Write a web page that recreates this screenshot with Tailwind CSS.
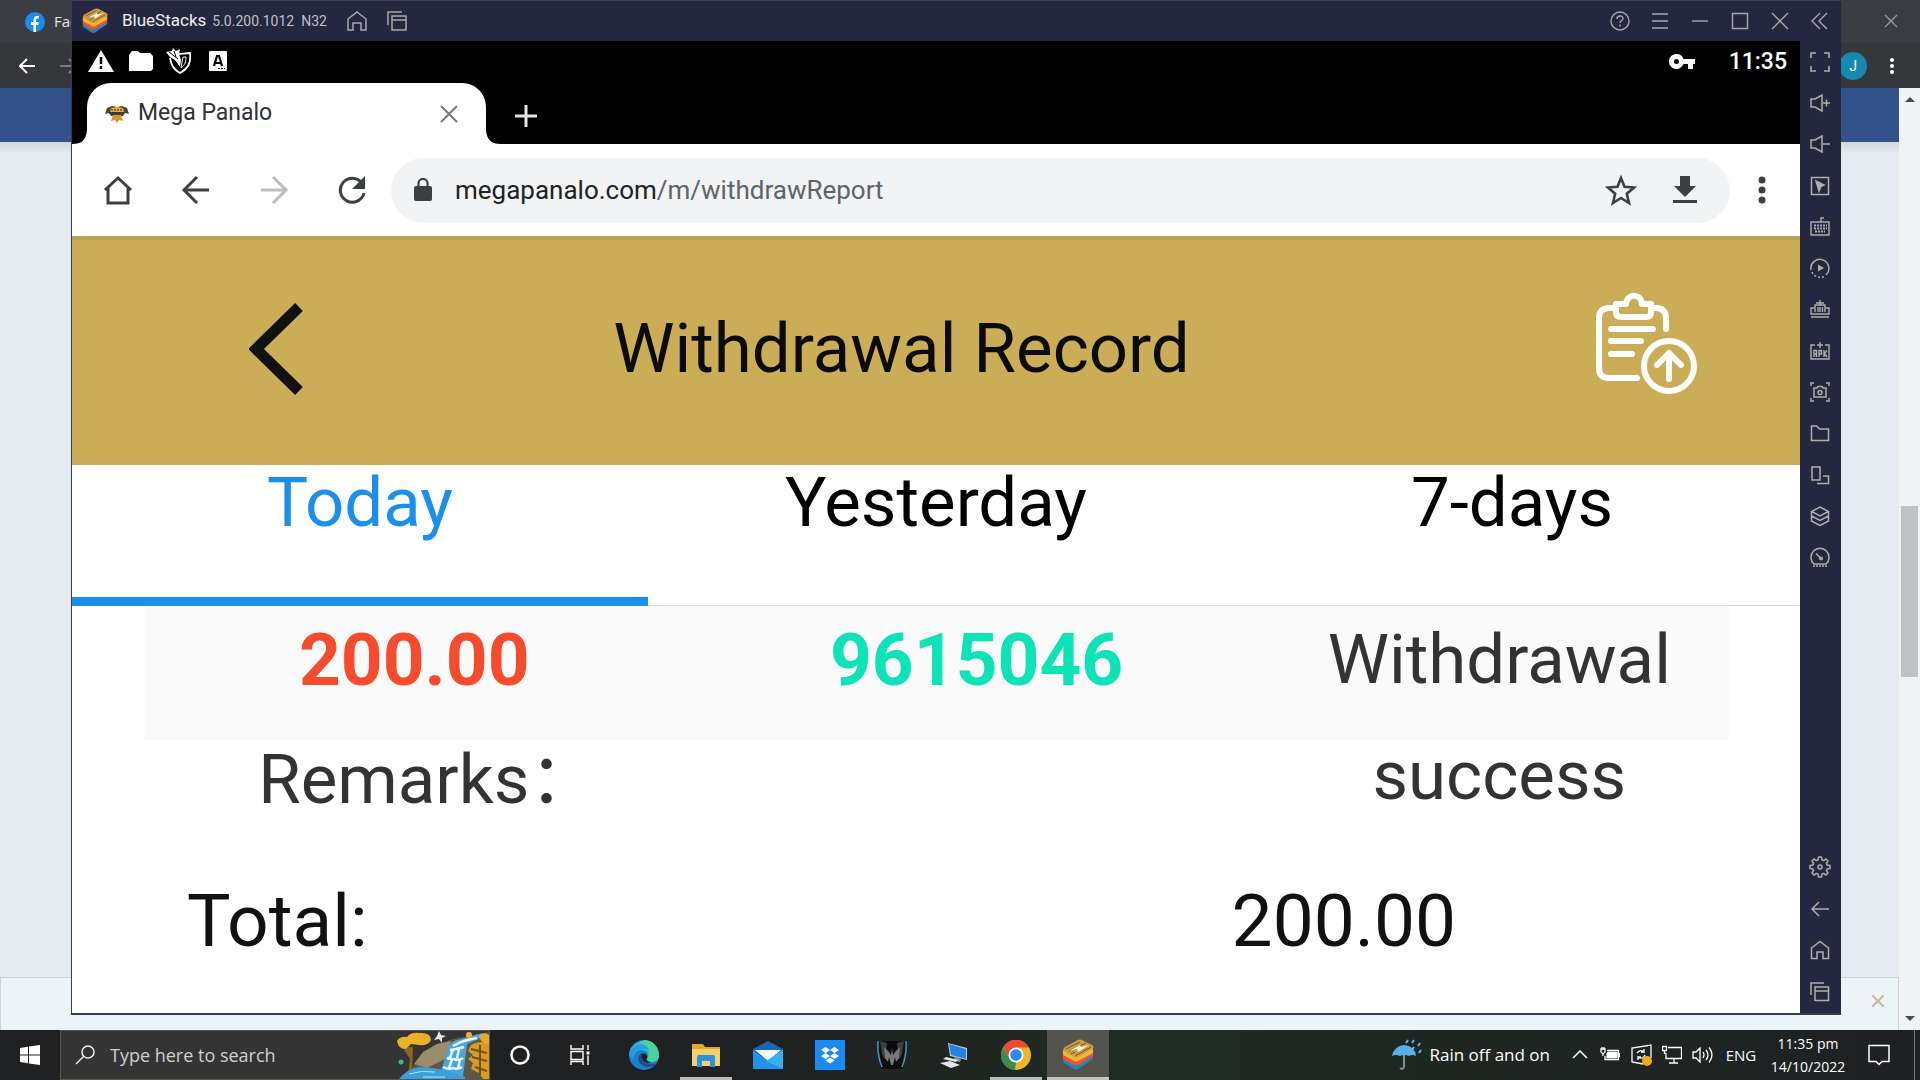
<!DOCTYPE html>
<html lang="en">
<head>
    <meta charset="UTF-8">
    <meta name="viewport" content="width=device-width, initial-scale=1.0">
    <title>Withdrawal Record</title>
    <script src="https://cdn.jsdelivr.net/npm/@tailwindcss/browser@4"></script>
</head>
<body class="h-screen flex flex-col overflow-hidden font-['Roboto',sans-serif]">

<!-- shared logo -->
<svg class="hidden">
    <symbol id="bluestacks" viewBox="0 0 32 32">
        <path d="M1 20v3l11 7q2 1 4 0l15-10v-4L14 25z" fill="#2583bd"/>
        <path d="M1 16v4l11 6q2 1 4 0l15-9v-4L14 21z" fill="#f0542f"/>
        <path d="M1 11v5l11 6q2 1 4 0l15-8V9L14 17z" fill="#f3b62c"/>
        <path d="M2 12Q0 10 3 8l13-7q2-1 4 0l10 5q3 2 0 4L16 18q-2 1-4 0z" fill="#c99c49"/>
        <path d="M4 10L18 3M7 12l17-8M9 15l4-2M13 17l16-9" stroke="#6c5a30" stroke-width="1"/>
        <path d="M7 12l11-6 1 2 8-2-11 7-1-3z" fill="#fbf3da"/>
    </symbol>
</svg>

<main class="relative flex-1 min-h-0 flex flex-col">
    <!-- Browser behind the emulator -->
    <div class="h-[43px] shrink-0 bg-[#3c3d42] flex items-center justify-between pl-[25px] pr-[21px]">
        <div class="flex items-center gap-[9px] text-[15px] text-gray-200 font-['Open_Sans',sans-serif]">
            <svg class="size-5" viewBox="0 0 20 20"><circle cx="10" cy="10" r="10" fill="#1a8cf0"/><path d="M8.500 20v-7H6v-3h2.500V8c0-2.600 1.500-3.900 3.700-3.900.9 0 1.600.1 1.600.1v2.400h-1.200c-1.200 0-1.600.7-1.600 1.500V10h2.700l-.4 3H11v7z" fill="#fff"/></svg>
            <span>Facebook</span>
        </div>
        <button aria-label="Close"><svg class="size-4" viewBox="0 0 16 16" fill="none" stroke="#9a9b9e" stroke-width="1.300"><path d="M2 1l12 12M14 1L2 13"/></svg></button>
    </div>
    <div class="h-[45px] shrink-0 bg-[#36373b] flex items-center justify-between pl-[18px] pr-6">
        <div class="flex items-center gap-6">
            <button aria-label="Back"><svg class="size-[18px]" viewBox="0 0 18 18" fill="none" stroke="#fff" stroke-width="2"><path d="M17 9H2M9 2L2 9l7 7"/></svg></button>
            <button aria-label="Forward"><svg class="size-[18px]" viewBox="0 0 18 18" fill="none" stroke="#7c7d80" stroke-width="2"><path d="M0 9h16M9 2l7 7-7 7"/></svg></button>
        </div>
        <div class="flex items-center gap-[21px]">
            <span class="size-7 rounded-full bg-[#1589ae] text-white text-sm flex items-center justify-center">J</span>
            <button aria-label="Menu"><svg class="w-2 h-5" viewBox="0 0 8 20" fill="#fff"><circle cx="4" cy="4" r="2"/><circle cx="4" cy="10" r="2"/><circle cx="4" cy="16" r="2"/></svg></button>
        </div>
    </div>
    <div class="flex-1 min-h-0 flex bg-[#e6ebf2]">
        <div class="flex-1 flex flex-col">
            <div class="h-[54px] bg-[#34528a]"></div>
            <div class="h-3 bg-linear-to-b from-[#d2d6d9] to-[#e6ebf2]"></div>
            <div class="mt-auto h-[53px] bg-[#ecf4f8] border border-b-0 border-[#ccd6da] flex items-start justify-end pt-[17px] pr-[14px]">
                <button aria-label="Dismiss"><svg class="size-3" viewBox="0 0 12 12" stroke="#cbb99b" stroke-width="2"><path d="M0 0l12 12M12 0L0 12"/></svg></button>
            </div>
        </div>
        <div class="w-[21px] bg-[#f1f2f3] flex flex-col items-center justify-between py-2">
            <svg class="w-[10px] h-[6px]" viewBox="0 0 10 6"><path d="M0 6l5-5 5 5z" fill="#4a4a4a"/></svg>
            <div class="w-[17px] h-[171px] bg-[#c0c1c2] mt-[64px]"></div>
            <svg class="w-[10px] h-[6px]" viewBox="0 0 10 6"><path d="M0 0l5 5 5-5z" fill="#4a4a4a"/></svg>
        </div>
    </div>

    <!-- Emulator window -->
    <div class="absolute top-0 bottom-[15px] left-[71px] right-[79px] flex flex-col bg-[#252640] border-l border-b-2 border-[#333d4c]">
        <div class="h-[41px] shrink-0 border-t border-[#3d3e50] flex items-center text-[#a9a9ab]">
            <svg class="size-[26px] ml-[10px]"><use href="#bluestacks"/></svg>
            <span class="ml-[14px] text-[17px] text-[#eeeeee]">BlueStacks</span>
            <span class="ml-[6px] text-sm text-[#c0c0c8]">5.0.200.1012&nbsp; N32</span>
            <button aria-label="Home" class="ml-5"><svg class="size-5" viewBox="0 0 20 20" fill="none" stroke="currentColor" stroke-width="1.500"><path d="M1 8l9-7 9 7v11h-5v-7H6v7H1z"/></svg></button>
            <button aria-label="Windows" class="ml-5"><svg class="size-5" viewBox="0 0 20 20" fill="none" stroke="currentColor" stroke-width="1.500"><path d="M1 14V1h14M5 5h14v14H5zM5 9h14"/></svg></button>
            <div class="ml-auto flex mr-px">
                <button aria-label="Help" class="w-10 flex justify-center"><svg class="size-5" viewBox="0 0 20 20" fill="none" stroke="currentColor" stroke-width="1.400"><circle cx="10" cy="10" r="9"/><path d="M7 8c0-4 6-4 6-.5 0 2-3 2-3 4.500M10 13.500v2"/></svg></button>
                <button aria-label="Menu" class="w-10 flex justify-center"><svg class="size-5" viewBox="0 0 20 20" stroke="currentColor" stroke-width="1.400"><path d="M2 3h16M2 10h16M2 17h16"/></svg></button>
                <button aria-label="Minimize" class="w-10 flex justify-center"><svg class="size-5" viewBox="0 0 20 20" stroke="currentColor" stroke-width="1.400"><path d="M2 10h16"/></svg></button>
                <button aria-label="Maximize" class="w-10 flex justify-center"><svg class="size-5" viewBox="0 0 20 20" fill="none" stroke="currentColor" stroke-width="1.400"><path d="M2.500 2.500h15v15h-15z"/></svg></button>
                <button aria-label="Close" class="w-10 flex justify-center"><svg class="size-5" viewBox="0 0 20 20" stroke="currentColor" stroke-width="1.400"><path d="M2 2l16 16M18 2L2 18"/></svg></button>
                <button aria-label="Collapse" class="w-10 flex justify-center"><svg class="size-5" viewBox="0 0 20 20" fill="none" stroke="currentColor" stroke-width="1.400"><path d="M10 2l-8 8 8 8M17 2l-8 8 8 8"/></svg></button>
            </div>
        </div>

        <div class="flex-1 min-h-0 flex">
            <div class="flex-1 flex flex-col bg-white">
                <!-- Android status bar -->
                <div class="h-[42px] bg-black text-white flex items-center pb-[2px] pl-4 pr-[13px]">
                    <svg class="w-[26px] h-[22px]" viewBox="0 0 26 22"><path d="M13 0l13 22H0z" fill="#fff"/><path d="M13 7v7M13 16v3" stroke="#000" stroke-width="2.500"/></svg>
                    <svg class="w-[26px] h-[22px] ml-[14px]" viewBox="0 0 26 22" fill="#fff"><path d="M1 5l3-4h6l2 2h10l3 3v13l-2 2H1z"/></svg>
                    <svg class="size-[26px] ml-3" viewBox="0 0 26 26" fill="none" stroke="#fff" stroke-width="1.800"><path d="M13 6c4 0 6-1 11-1 1 9-1 15-10 20C8 22 5 17 4 10"/><path d="M17 9h3c0 5-1 8-5 11z" stroke-width="1"/><path d="M0 4l6-1 1-3 3 3 4-2-1 5 2 6-1 7-5-7-5-3z" fill="#fff" stroke="none"/><path d="M3 4l9 7M8 3l2 6" stroke="#000" stroke-width="1"/></svg>
                    <svg class="w-[18px] h-5 ml-[17px]" viewBox="0 0 18 20"><rect width="18" height="20" rx="1" fill="#fff"/><path d="M5 15l3-10h2l3 10M6 12h6" fill="none" stroke="#000" stroke-width="2.200"/><path d="M9 17.500h7" stroke="#000" stroke-dasharray="2 1"/></svg>
                    <svg class="w-[26px] h-[15px] ml-auto mr-[34px]" viewBox="0 0 26 15"><path fill="#fff" fill-rule="evenodd" d="M7.500 0a7.500 7.500 0 0 1 7 5H26v5h-2v5h-5v-5h-4.500a7.500 7.500 0 1 1-7-10zm0 5a2.500 2.500 0 1 0 0 5 2.500 2.500 0 0 0 0-5z"/></svg>
                    <span class="text-[23px] font-medium leading-none">11:35</span>
                </div>
                <!-- Tab strip -->
                <div class="h-[61px] bg-black flex items-end">
                    <svg class="w-[15px] h-5" viewBox="0 0 15 20" fill="#fff"><path d="M0 20c10 0 14-4 15-14v14z"/></svg>
                    <div class="w-[399px] h-full bg-white rounded-t-[24px] flex items-center pl-[18px] pr-7 text-[23px] text-[#303134]">
                        <svg class="w-6 h-[18px]" viewBox="0 0 24 18"><path d="M2 3l5-2 5 1 5-1 5 2 2 6-4-1-2 3H6L4 8 0 9z" fill="#4c4432"/><path d="M6 3l6-1 6 1 1 4H5z" fill="#e2b13c"/><path d="M8 10h8l2 6-4-1-2 3-2-3-4 1z" fill="#d9952f"/><path d="M6 5h12M4 8h15" stroke="#2a261f" stroke-width="1.200" stroke-dasharray="2 1"/></svg>
                        <span class="ml-[9px]">Mega Panalo</span>
                        <button aria-label="Close tab" class="ml-auto"><svg class="size-[18px]" viewBox="0 0 18 18" stroke="#77787b" stroke-width="2"><path d="M1 1l16 16M17 1L1 17"/></svg></button>
                    </div>
                    <svg class="w-[15px] h-5" viewBox="0 0 15 20" fill="#fff"><path d="M15 20C5 20 1 16 0 6v14z"/></svg>
                    <button aria-label="New tab" class="self-center ml-[13px] pt-1"><svg class="size-6" viewBox="0 0 24 24" stroke="#e4e4e4" stroke-width="3"><path d="M12 1v22M1 12h22"/></svg></button>
                </div>
                <!-- Address bar -->
                <div class="h-[92px] flex items-center pl-[31px] pr-[31px] text-[#3c4043]">
                    <div class="flex gap-12">
                        <button aria-label="Home"><svg class="size-[30px]" viewBox="0 0 30 30" fill="none" stroke="currentColor" stroke-width="3"><path d="M2 15L15 3l13 12M5 13v15h20V13"/></svg></button>
                        <button aria-label="Back"><svg class="size-[30px]" viewBox="0 0 30 30" fill="none" stroke="currentColor" stroke-width="3"><path d="M28 15H3M16 2L3 15l13 13"/></svg></button>
                        <button aria-label="Forward" class="text-[#bcbdbe]"><svg class="size-[30px]" viewBox="0 0 30 30" fill="none" stroke="currentColor" stroke-width="3"><path d="M2 15h25M14 2l13 13-13 13"/></svg></button>
                        <button aria-label="Reload"><svg class="size-[30px]" viewBox="0 0 30 30"><path d="M25 8a12 12 0 1 0 2 10" fill="none" stroke="currentColor" stroke-width="3"/><path d="M28 1v13H15z" fill="currentColor"/></svg></button>
                    </div>
                    <div class="flex-1 h-[65px] rounded-full bg-[#f1f3f4] ml-6 flex items-center pl-[23px] pr-[33px]">
                        <svg class="w-[18px] h-6" viewBox="0 0 18 24"><rect y="8" width="18" height="15" rx="2" fill="currentColor"/><path d="M4.500 9V5.500a4.500 4.500 0 0 1 9 0V9" fill="none" stroke="currentColor" stroke-width="2.200"/></svg>
                        <p class="flex-1 ml-[23px] text-[26px] text-[#202124]">megapanalo.com<span class="text-[#5f6368]">/m/withdrawReport</span></p>
                        <button aria-label="Bookmark"><svg class="size-8" viewBox="0 0 32 32" fill="none" stroke="currentColor" stroke-width="2.600"><path d="M16 4l3.500 8.700 9.500.8-7.200 6.200 2.200 9.300-8-5-8 5 2.200-9.300L3 13.500l9.500-.8z"/></svg></button>
                        <button aria-label="Download" class="ml-9"><svg class="w-6 h-[30px]" viewBox="0 0 24 30" fill="currentColor"><path d="M7 1h10v10h6L12 22 1 11h6zM0 25h24v3H0z"/></svg></button>
                    </div>
                    <button aria-label="More" class="ml-[25px]"><svg class="w-[14px] h-[30px]" viewBox="0 0 14 30" fill="currentColor"><circle cx="7" cy="5" r="3.500"/><circle cx="7" cy="15" r="3.500"/><circle cx="7" cy="25" r="3.500"/></svg></button>
                </div>

                <!-- Page header -->
                <header class="h-[229px] bg-[#ccad57] border-t-4 border-[#bda04e] flex items-center pb-2 pl-[177px] pr-[102px]">
                    <button aria-label="Go back"><svg class="w-[54px] h-[92px]" viewBox="0 0 54 92" fill="none" stroke="#111" stroke-width="11"><path d="M50 4L7 46l43 42"/></svg></button>
                    <h1 class="flex-1 pr-24 text-center text-[69px] leading-none text-[#0b0b0b]">Withdrawal Record</h1>
                    <button aria-label="Withdraw report" class="pb-3"><svg class="w-[102px] h-[102px]" viewBox="0 0 102 102" fill="none" stroke="#fff" stroke-width="6" stroke-linecap="round" stroke-linejoin="round"><path d="M17 16H12Q3 17 3 26v50q0 10 10 10h28M55 16h6q9 1 9 10v11"/><path d="M20 12h10c1-11 15-11 16 0h9v8q0 5-5 5H25q-5 0-5-5z"/><path d="M15 37h42M15 49h30M15 62h21"/><circle cx="73" cy="74" r="25"/><path d="M73 87V62M61 73l12-12 12 12"/></svg></button>
                </header>

                <!-- Period tabs -->
                <nav class="h-[141px] grid grid-cols-3 border-b border-[#d9d9d9] text-[69px] leading-[76px] text-black">
                    <a href="#" class="h-[141px] border-b-[9px] border-[#1c8eeb] text-[#1c8eeb] text-center">Today</a>
                    <a href="#" class="text-center">Yesterday</a>
                    <a href="#" class="text-center">7-days</a>
                </nav>

                <!-- Records -->
                <table class="ml-[73px] mr-[71px] table-fixed text-center text-[69px] text-[#333]">
                    <tr class="h-[134px] bg-[#fafafa] align-top leading-[108px]">
                        <td class="w-[34%] p-0 text-[73px] font-bold text-[#f74b2d]">200.00</td>
                        <td class="w-[37%] p-0 text-[73px] font-bold text-[#0ee3b8]">9615046</td>
                        <td class="w-[29%] p-0">Withdrawal</td>
                    </tr>
                    <tr class="h-[121px] align-top leading-[80px]">
                        <td class="p-0 pl-7 font-['Roboto','Noto_Sans_CJK_SC',sans-serif]">Remarks：</td>
                        <td class="p-0"></td>
                        <td class="p-0 leading-[72px]">success</td>
                    </tr>
                </table>
                <div class="flex justify-between pl-[115px] pr-[344px] text-[73px] leading-[120px] text-[#111]">
                    <span>Total:</span>
                    <span>200.00</span>
                </div>
            </div>

            <!-- Side toolbar -->
            <aside class="w-[41px] pr-px flex flex-col justify-between text-[#b0b0a8]">
                <div class="h-[537px] grid grid-rows-13">
                    <button aria-label="Full screen" class="flex items-center justify-center"><svg class="size-5" viewBox="0 0 20 20" fill="none" stroke="currentColor" stroke-width="1.600"><path d="M1 6V1h5M14 1h5v5M19 14v5h-5M6 19H1v-5"/></svg></button>
                    <button aria-label="Volume up" class="flex items-center justify-center"><svg class="size-5" viewBox="0 0 20 20" fill="none" stroke="currentColor" stroke-width="1.500"><path d="M1 6h4l7-4v16l-7-4H1zM13 10h7M16.500 6.500v7"/></svg></button>
                    <button aria-label="Volume down" class="flex items-center justify-center"><svg class="size-5" viewBox="0 0 20 20" fill="none" stroke="currentColor" stroke-width="1.500"><path d="M1 6h4l7-4v16l-7-4H1zM13 10h7"/></svg></button>
                    <button aria-label="Lock cursor" class="flex items-center justify-center"><svg class="size-5" viewBox="0 0 20 20" fill="none" stroke="currentColor" stroke-width="1.500"><path d="M1.500 1.500h17v17h-17z"/><path d="M6 5l8 4-3 1.500L9 15z" fill="currentColor"/></svg></button>
                    <button aria-label="Keyboard controls" class="flex items-center justify-center"><svg class="size-5" viewBox="0 0 20 20" fill="none" stroke="currentColor" stroke-width="1.400"><path d="M1 5h18v13H1zM11 5V1h3"/><path d="M4 8.500h13M4 11.500h13M5 14.500h10" stroke-width="2" stroke-dasharray="2 1"/></svg></button>
                    <button aria-label="Macro" class="flex items-center justify-center"><svg class="size-5" viewBox="0 0 20 20" fill="none" stroke="currentColor" stroke-width="1.500"><path d="M1 12A9 9 0 1 1 16 17"/><path d="M2 14a9 9 0 0 0 13 4" stroke-dasharray="2 2"/><path d="M8 6.500l6 3.500-6 3.500z" fill="currentColor" stroke="none"/></svg></button>
                    <button aria-label="Multi-instance" class="flex items-center justify-center"><svg class="size-5" viewBox="0 0 20 20" fill="none" stroke="currentColor" stroke-width="1.400"><path d="M4 9H1v6h18V9h-3M5 13V6h10v7M10 1v5M6 4h8M8 13V8M10 13V8M12.500 13V8M1 18h18"/></svg></button>
                    <button aria-label="Install APK" class="flex items-center justify-center"><svg class="size-5" viewBox="0 0 20 20" fill="none" stroke="currentColor" stroke-width="1.400"><path d="M5 4H1v14h18V4h-4M10 1v6M7 4h6"/><path d="M4 16V9.500h2.500V16M4 13h2.500M9 16V9.500h2.500V13H9M14 9v7M17 9.500l-2.500 3L17 16"/></svg></button>
                    <button aria-label="Screenshot" class="flex items-center justify-center"><svg class="size-5" viewBox="0 0 20 20" fill="none" stroke="currentColor" stroke-width="1.500"><path d="M1 4V1h3M16 1h3v3M19 16v3h-3M4 19H1v-3M4 6h3l1-1.500h4L13 6h3v9H4z"/><circle cx="10" cy="10.500" r="2"/></svg></button>
                    <button aria-label="Media folder" class="flex items-center justify-center"><svg class="size-5" viewBox="0 0 20 20" fill="none" stroke="currentColor" stroke-width="1.500"><path d="M1.500 3h5l3 3h9v11.500h-17z"/></svg></button>
                    <button aria-label="Rotate" class="flex items-center justify-center"><svg class="size-5" viewBox="0 0 20 20" fill="none" stroke="currentColor" stroke-width="1.500"><path d="M2 2h8v13H2zM13 11h5.500v7.500H7"/></svg></button>
                    <button aria-label="Layers" class="flex items-center justify-center"><svg class="size-5" viewBox="0 0 20 20" fill="none" stroke="currentColor" stroke-width="1.500"><path d="M10 1l8.500 4.500L10 10 1.500 5.500zM1.500 5.500V15l8.500 4.500 8.500-4.500V5.500M1.500 10l8.500 4.500 8.500-4.500"/></svg></button>
                    <button aria-label="Performance" class="flex items-center justify-center"><svg class="size-5" viewBox="0 0 20 20" fill="none" stroke="currentColor" stroke-width="1.500"><path d="M4 17a9 9 0 1 1 12 0zM6 6.500l5 5"/><circle cx="11" cy="11.500" r="1.200"/><path d="M3 19h14" stroke-dasharray="2 1"/></svg></button>
                </div>
                <div class="h-[167px] grid grid-rows-4">
                    <button aria-label="Settings" class="flex items-center justify-center"><svg class="size-[22px]" viewBox="0 0 22 22" fill="none" stroke="currentColor" stroke-width="1.500" stroke-linejoin="round"><path d="M9.500 1h3l.5 3 1.500.6L17 3l2 2-1.600 2.500.6 1.500 3 .5v3l-3 .5-.6 1.500L19 17l-2 2-2.500-1.600-1.500.6-.5 3h-3L9 18l-1.500-.6L5 19l-2-2 1.600-2.500L4 13l-3-.5v-3L4 9l.6-1.500L3 5l2-2 2.500 1.600L9 4z"/><circle cx="11" cy="11" r="2"/></svg></button>
                    <button aria-label="Back" class="flex items-center justify-center"><svg class="size-5" viewBox="0 0 20 20" fill="none" stroke="currentColor" stroke-width="1.500"><path d="M19 10H2M9 3l-7 7 7 7"/></svg></button>
                    <button aria-label="Home" class="flex items-center justify-center"><svg class="size-5" viewBox="0 0 20 20" fill="none" stroke="currentColor" stroke-width="1.500"><path d="M1.500 8L10 1.500 18.500 8v10.500H13V12H7v6.500H1.500z"/></svg></button>
                    <button aria-label="Recent apps" class="flex items-center justify-center"><svg class="size-5" viewBox="0 0 20 20" fill="none" stroke="currentColor" stroke-width="1.500"><path d="M1 13V1h13M5 5h13.500v13.500H5zM5 9h14"/></svg></button>
                </div>
            </aside>
        </div>
    </div>
</main>

<!-- Windows taskbar -->
<footer class="h-[50px] shrink-0 flex items-center text-white font-['Open_Sans',sans-serif] bg-linear-to-r from-[#202122] from-40% via-[#1f2b22] via-60% to-[#1f2022]">
    <button aria-label="Start" class="w-[60px] flex justify-center"><svg class="size-5" viewBox="0 0 20 20" fill="#fff"><path d="M0 3l8-1.200v7.700H0zM9 1.600L20 0v9.500H9zM0 10.500h8v7.700L0 17zM9 10.500h11V20L9 18.400z"/></svg></button>
    <label class="w-[430px] h-full bg-[#333433] border border-[#55564e] flex items-center pl-[14px]">
        <svg class="size-5 shrink-0" viewBox="0 0 20 20" fill="none" stroke="#eee" stroke-width="1.500"><circle cx="13" cy="7" r="6"/><path d="M8.500 11.500L1 19"/></svg>
        <input type="text" placeholder="Type here to search" class="flex-1 min-w-0 ml-[15px] text-lg outline-none placeholder:text-[#cfd2d0]">
        <svg class="w-[92px] h-12 shrink-0" viewBox="0 0 92 48">
            <path d="M8 48l9-14 5-7 14-12 20-7 36-7v47z" fill="#5d5846"/>
            <path d="M17 33l9-12 14-8 14-3-6 18-18 9z" fill="#9a8d6c"/>
            <path d="M11 16h5l-1 27h-4l2-15-6-9z" fill="#8a6527"/>
            <path d="M0 10q3-5 10-4 4-5 12-4 12-1 12 7-2 6-12 5l-8-1-5 5Q2 19 0 10z" fill="#e9b02c"/>
            <path d="M52 15q2-4 8-6l26-7-2 5-14 6-4 33H42z" fill="#4aa6df"/>
            <path d="M56 15q10-6 24-8M53 19l6-1 8-2M50 27q5 2 7 1 5 2 9-1M46 36q6 3 10 1 4 2 9-1M56 18l-3 9M62 18l-2 9M55 29l-3 8M63 29l-2 8" stroke="#eaf8ff" stroke-width="2.500" fill="none"/>
            <path d="M2 48q8-10 20-12 22 0 46 10v2z" fill="#3aa0dd"/><path d="M12 43q12-4 26-2M26 46h22" stroke="#b5e4fa" fill="none"/>
            <path d="M74 14q8-4 18-3v37h-6l-4-6-8-4 2-6-5-4 5-4-5-4z" fill="#d99b1f"/><path d="M74 18l16 4M75 26l15 4M78 36l12 4M83 14v30" stroke="#6d5220" stroke-width="2"/>
            <path d="M82 5q5-5 10-1v9q-8 0-10-8z" fill="#e9a928"/>
            <circle cx="72" cy="4" r="3" fill="#e9b02c"/><circle cx="4" cy="31" r="2.500" fill="#35b988"/>
            <path d="M42 0l2 4 5 1-4 2v5l-3-4-5 1 3-4z" fill="#e4e4e4"/>
        </svg>
    </label>
    <button aria-label="Cortana" class="w-[60px] flex justify-center"><svg class="size-5" viewBox="0 0 20 20" fill="none" stroke="#fff" stroke-width="2.500"><circle cx="10" cy="10" r="8.500"/></svg></button>
    <button aria-label="Task view" class="w-[60px] flex justify-center"><svg class="size-5" viewBox="0 0 20 20" fill="none" stroke="#fff" stroke-width="1.400"><path d="M1 0v4h12V0M1 6.500h12v8H1zM1 20v-3.500h12V20M18 0v5M18 10.500V20"/><path d="M16.500 6.500h3v3h-3z" fill="#fff" stroke="none"/></svg></button>
    <div class="ml-[3px] h-full flex">
        <button aria-label="Edge" class="w-[62px] flex items-center justify-center">
            <svg class="size-[30px]" viewBox="0 0 30 30"><circle cx="15" cy="15" r="15" fill="#1682cf"/><path d="M1 11A15 15 0 0 1 30 15c0 5-4 7-8 7-3 0-5-1-4-3 3-4 0-9-6-9C6 10 2 13 0 17z" fill="#2fbfcf"/><path d="M16 0a15 15 0 0 1 14 15c0 5-4 7-8 7-3 0-5-1-4-3 4-6 2-13-8-17z" fill="#4fcf9a"/><path d="M1 11C5 4 16 1 20 10c-8-3-15 1-16 10Q-1 15 1 11z" fill="#2a9be0"/><path d="M12 13c-5 4-3 13 6 14 4 0 8-1 10-4-5 2-10 1-12-3-2-3-1-5-4-7z" fill="#2b4a86"/><path d="M14 13q-3 3 0 7 4 4 8 2-6-1-4-4 1-4-4-5z" fill="#202122"/></svg>
        </button>
        <button aria-label="File Explorer" class="relative w-[62px] flex items-center justify-center">
            <svg class="w-7 h-6" viewBox="0 0 28 24"><path d="M0 1h11l2 3h15v19H0z" fill="#e0a92e"/><path d="M0 6h28v17H0z" fill="#f5cf6b"/><path d="M5 24V14q0-2 2-2h14q2 0 2 2v10h-5v-6h-8v6z" fill="#2b93dc"/></svg>
            <span class="absolute bottom-0 inset-x-[5px] h-[3px] bg-[#bcbcbc]"></span>
        </button>
        <button aria-label="Mail" class="w-[62px] flex items-center justify-center">
            <svg class="w-[30px] h-7" viewBox="0 0 30 28"><path d="M0 8L15 0l15 8v20H0z" fill="#1468b8"/><path d="M2 9h26L15 20z" fill="#f4f6f9"/><path d="M0 9l15 11L30 9v19H0z" fill="#2193ea"/><path d="M30 9L13 20l17 8z" fill="#37b0ee"/><path d="M3 9h24L15 18z" fill="#f4f6f9"/></svg>
        </button>
        <button aria-label="Dropbox" class="w-[62px] flex items-center justify-center">
            <svg class="size-[30px]" viewBox="0 0 30 30"><path d="M0 0h30v30H0z" fill="#1b8af2"/><path d="M10.500 7l4.500 3-4.500 3L6 10zM19.500 7l4.500 3-4.500 3-4.500-3zM10.500 13l4.500 3-4.500 3L6 16zM19.500 13l4.500 3-4.500 3-4.500-3zM15 17.500l4.500 3L15 23.500l-4.500-3z" fill="#fff"/></svg>
        </button>
        <button aria-label="Predator" class="w-[62px] flex items-center justify-center">
            <svg class="size-[30px]" viewBox="0 0 30 30"><path d="M1 1h28l-3 28H4z" fill="#0b0c0d"/><path d="M1 1q-1 14 4 26M29 1q1 14-4 26" fill="none" stroke="#2ba5b8" stroke-width="1.500"/><path d="M3 1l7 2-2 17-3-6zM27 1l-7 2 2 17 3-6z" fill="#3c3e40"/><path d="M7 7l5 5 2 3 1-7 1 7 2-3 5-5-1 11-3 4-1-5-2 8h-2l-2-8-1 5-3-4z" fill="#77787a"/></svg>
        </button>
        <button aria-label="Remote PC" class="w-[62px] flex items-center justify-center">
            <svg class="w-7 h-[26px]" viewBox="0 0 28 26"><path d="M8 1l19 5v12L10 14z" fill="#c8cdd2"/><path d="M9 2l17 5v10l-15-4z" fill="#2383e4"/><path d="M15 15l6 2-1 3-7-2z" fill="#8c9196"/><path d="M6 15l12 3-2 2-13-3zM0 21l10-2 10 4-9 3z" fill="#e3e6e8"/></svg>
        </button>
        <button aria-label="Chrome" class="relative w-[62px] flex items-center justify-center">
            <svg class="size-[30px]" viewBox="0 0 30 30"><circle cx="15" cy="15" r="15" fill="#f0b62b"/><path d="M2 7.500A15 15 0 0 1 28 7.500H15L8.500 19z" fill="#ea4a33"/><path d="M2 7.500L8.500 19 15 22.500l-1 7.500A15 15 0 0 1 2 7.500z" fill="#3c8b50"/><circle cx="15" cy="15" r="7.500" fill="#fff"/><circle cx="15" cy="15" r="5.800" fill="#2a8bf0"/></svg>
            <span class="absolute bottom-0 inset-x-[5px] h-[3px] bg-[#bcbcbc]"></span>
        </button>
        <button aria-label="BlueStacks" class="relative w-[62px] bg-[#52544d] flex items-center justify-center">
            <svg class="size-8"><use href="#bluestacks"/></svg>
            <span class="absolute bottom-0 inset-x-0 h-[3px] bg-[#c4c4c4]"></span>
        </button>
    </div>
    <div class="ml-auto h-full flex items-center">
        <svg class="w-[30px] h-8" viewBox="0 0 30 32"><path d="M0 17Q2 7 12 6q11 1 12 11-4-2-7 0-5-2-9 0-4-2-8 0z" fill="#58aee6"/><path d="M12 16v12q-1 3-4 1" fill="none" stroke="#85939b" stroke-width="2"/><path d="M16 1l-2 3M22 1l-2 3M28 4l-2 3M22 8l-2 3M29 11l-2 3" stroke="#65b8ee" stroke-width="2"/></svg>
        <span class="ml-2 text-[17px]">Rain off and on</span>
        <button aria-label="Show hidden icons" class="ml-[22px]"><svg class="w-4 h-5" viewBox="0 0 16 20" fill="none" stroke="#fff" stroke-width="1.500"><path d="M1 13l7-7 7 7"/></svg></button>
        <svg class="w-5 h-5 ml-3" viewBox="0 0 20 20" fill="none" stroke="#fff" stroke-width="1.300"><path d="M7 5.500h11.500v9H5V11"/><path d="M8 7.500h9v5H7V9z" fill="#fff"/><path d="M1 4h4v3q-2 3-4 0zM2 2v2M4 2v2M3 8v3"/><path d="M19.500 8v4"/></svg>
        <svg class="w-[21px] h-6 ml-[11px]" viewBox="0 0 21 24" fill="none" stroke="#fff" stroke-width="1.300"><path d="M12 21l-11-2V5l19-3v13M6 10q3-4 7-1V6M13 9h-3M14 12q-2 5-7 2v3M7 14h3"/><circle cx="16" cy="18" r="5" fill="#eaa823" stroke="none"/></svg>
        <svg class="w-5 h-5 ml-[10px]" viewBox="0 0 20 20" fill="none" stroke="#fff" stroke-width="1.300"><path d="M6 2.500h13.500v11H4V8M12 14v4M7 18h9M.5 1.500h4v4h-4zM2.500 5.500V9"/></svg>
        <svg class="w-[22px] h-5 ml-[10px]" viewBox="0 0 22 20" fill="none" stroke="#fff" stroke-width="1.300"><path d="M1 7h3l4-4v14l-4-4H1zM11 7q2 3 0 6M14 5q4 5 0 10M17 2.500q6 7 0 15"/></svg>
        <span class="w-[54px] text-center text-[15px]">ENG</span>
        <div class="w-20 text-center text-sm leading-[23px]">
            <p>11:35 pm</p>
            <p>14/10/2022</p>
        </div>
        <button aria-label="Notifications" class="ml-5"><svg class="w-[22px] h-[22px]" viewBox="0 0 22 22" fill="none" stroke="#fff" stroke-width="1.500"><path d="M1 1.500h20v16h-7L11 20.500 8 17.500H1z"/></svg></button>
        <span class="ml-6 mr-[5px] h-full border-l border-[#777]"></span>
    </div>
</footer>

</body>
</html>
